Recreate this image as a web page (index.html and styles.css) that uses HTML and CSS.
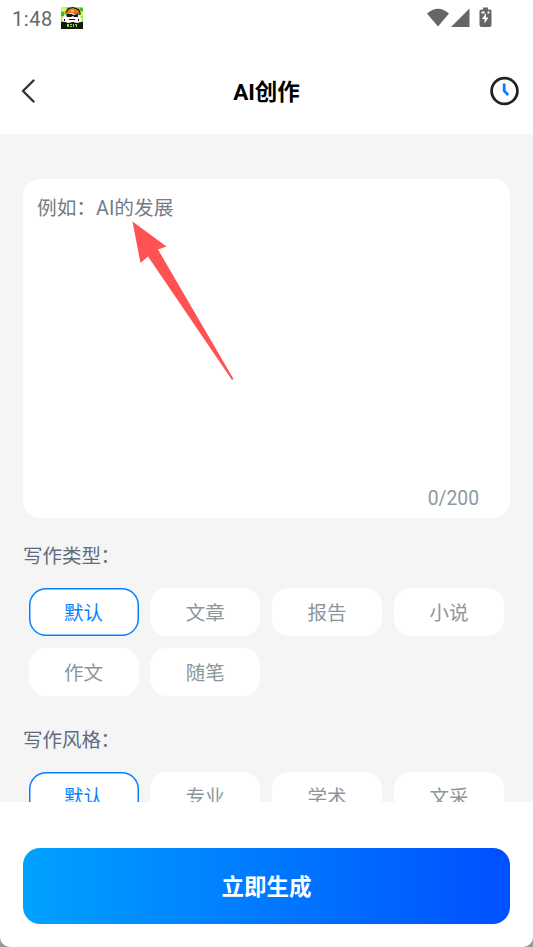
FILE: index.html
```html
<!DOCTYPE html>
<html lang="zh-CN">
<head>
<meta charset="utf-8">
<title>AI创作</title>
<link rel="stylesheet" href="styles.css">
</head>
<body>
<div class="app">
  <div class="status">
    <span class="time">1:48</span>
    <svg class="app-icon" viewBox="0 0 22 22">
      <path fill="#9ee83a" d="M0 0h22v22H0z"/>
      <path fill="#d8f06a" d="M0 0h5v4H0zM16 5h6v4h-6z"/>
      <path fill="#49b51f" d="M0 5h3v4H0zM19 1h3v3h-3z"/>
      <path fill="#151710" d="M0 15h22v7H0zM4 6l3-5 5-1 6 2 2 5-2 1z"/>
      <path fill="#e87920" d="M5 6l3-4 4-1 5 2 2 4-5-1-5 1z"/>
      <path fill="#f4c22c" d="M10 3h3v2h-3z"/>
      <path fill="#fff" d="M4 8l6-2 7 1 2 2 2 3-1 3-4 1-4-1-5 1-5-2-1-3z"/>
      <path fill="#171717" d="M5 7h6l1 1 5-1v3h-4l-1-1-2 1H6zM8 12h6v1H8zM3 12h1v2H3zM17 12h1v2h-1z"/>
      <path fill="#8ce63f" d="M6 17h2v3H6zM9 17h2v1H9zM9 19h2v1H9zM12 17h1v3h-1zM14 17h2v1h-2zM15 18h1v2h-1z"/>
    </svg>
    <span class="grow"></span>
    <svg class="signals" viewBox="0 0 68 22">
      <path d="M0 6.500Q11 -3 22 6.500L11 19.500ZM42.500 1.500V20H24Z"/>
      <path fill-rule="evenodd" d="M56 2.500V.500h5v2h2q1.500 0 1.500 1.500v14q0 2-2 2h-8q-2 0-2-2V4q0-1.500 2-1.500zM59 6l-4 6h2.500v4.500l4-6H59z"/>
      <path fill="#fff" d="M54.500 4.500h3v2h-3zM60.500 4.500h2v2h-2z"/>
    </svg>
  </div>
  <header class="header">
    <svg class="back" viewBox="0 0 14 24"><path d="M12.500 1.500 2 12l10.500 10.500"/></svg>
    <h1>AI创作</h1>
    <svg class="history" viewBox="0 0 30 30"><circle cx="15.500" cy="15" r="12.900"/><path d="M15.200 7.500v7.500l4 4"/></svg>
  </header>
  <main class="content">
    <section class="editor">
      <div class="placeholder">例如：AI的发展</div>
      <div class="counter">0/200</div>
      <svg class="pointer" viewBox="0 0 102 160"><path d="M.5.500 34.500 25.500 26 28.500 101.500 158 100 159 16 35.500 8.500 42Z"/></svg>
    </section>
    <h2>写作类型<span class="colon">：</span></h2>
    <div class="options">
      <div class="option selected">默认</div><div class="option">文章</div><div class="option">报告</div><div class="option">小说</div>
      <div class="option">作文</div><div class="option">随笔</div>
    </div>
    <h2 class="style-heading">写作风格<span class="colon">：</span></h2>
    <div class="options">
      <div class="option selected">默认</div><div class="option">专业</div><div class="option">学术</div><div class="option">文采</div>
    </div>
  </main>
  <footer class="footer"><div class="generate">立即生成</div></footer>
</div>
</body>
</html>
```
FILE: styles.css
```css
* { box-sizing: border-box; }
body { margin: 0; background: #999; font-family: Roboto, "Noto Sans CJK SC", sans-serif; }
.app { height: 947px; display: flex; flex-direction: column; overflow: hidden; background: #fff; border-radius: 0 0 10px 10px; }
.status { height: 48px; flex: none; display: flex; align-items: flex-start; padding: 7px 38px 0 12px; color: #666; }
.time { width: 49px; font-size: 20px; line-height: 24px; letter-spacing: .6px; }
.app-icon { width: 22px; height: 22px; }
.grow { flex: 1; }
.signals { width: 68px; height: 22px; fill: #666; }
.header { height: 86px; flex: none; display: flex; align-items: center; justify-content: space-between; padding: 0 14px 0 21px; }
.back { width: 14px; height: 24px; margin-right: 9px; fill: none; stroke: #333; stroke-width: 2.400; stroke-linecap: round; stroke-linejoin: round; }
.header h1 { margin: 0; padding-top: 1px; font-size: 22.500px; line-height: 32px; font-weight: 700; color: #000; }
.history { width: 30px; height: 30px; fill: none; stroke: #222; stroke-width: 2.800; }
.history path { stroke: #0880ff; }
.content { height: 668px; flex: none; overflow: hidden; padding: 45px 23px 0; background: #f5f5f5; }
.editor { position: relative; height: 339px; padding: 15px 31px 4px 14px; border-radius: 17px; background: #fff; display: flex; flex-direction: column; justify-content: space-between; }
.placeholder { font-size: 19.700px; line-height: 30px; color: #757b86; }
.counter { align-self: flex-end; font-size: 19.300px; line-height: 30px; color: #8d999f; }
.pointer { position: absolute; left: 109px; top: 42px; width: 102px; height: 160px; fill: #ff5252; }
h2 { margin: 24px 0 16px; font-size: 19.500px; line-height: 30px; font-weight: 400; color: #606b7e; }
.colon { margin-left: -.5px; }
.style-heading { margin-top: 30px; }
.options { display: grid; grid-template-columns: repeat(4, 110px); gap: 12px 11.800px; padding-left: 5.500px; }
.option { height: 48px; border-radius: 17px; background: #fff; color: #8b969c; font-size: 19.500px; line-height: 52px; text-align: center; }
.selected { box-shadow: inset 0 0 0 1.500px #087fff; color: #087fff; }
.footer { flex: 1; padding: 46px 23px 0; }
.generate { height: 76px; border-radius: 17px; background: linear-gradient(90deg, #00a2ff, #0050ff); color: #fff; font-size: 22.500px; font-weight: 700; line-height: 78px; text-align: center; }
```
